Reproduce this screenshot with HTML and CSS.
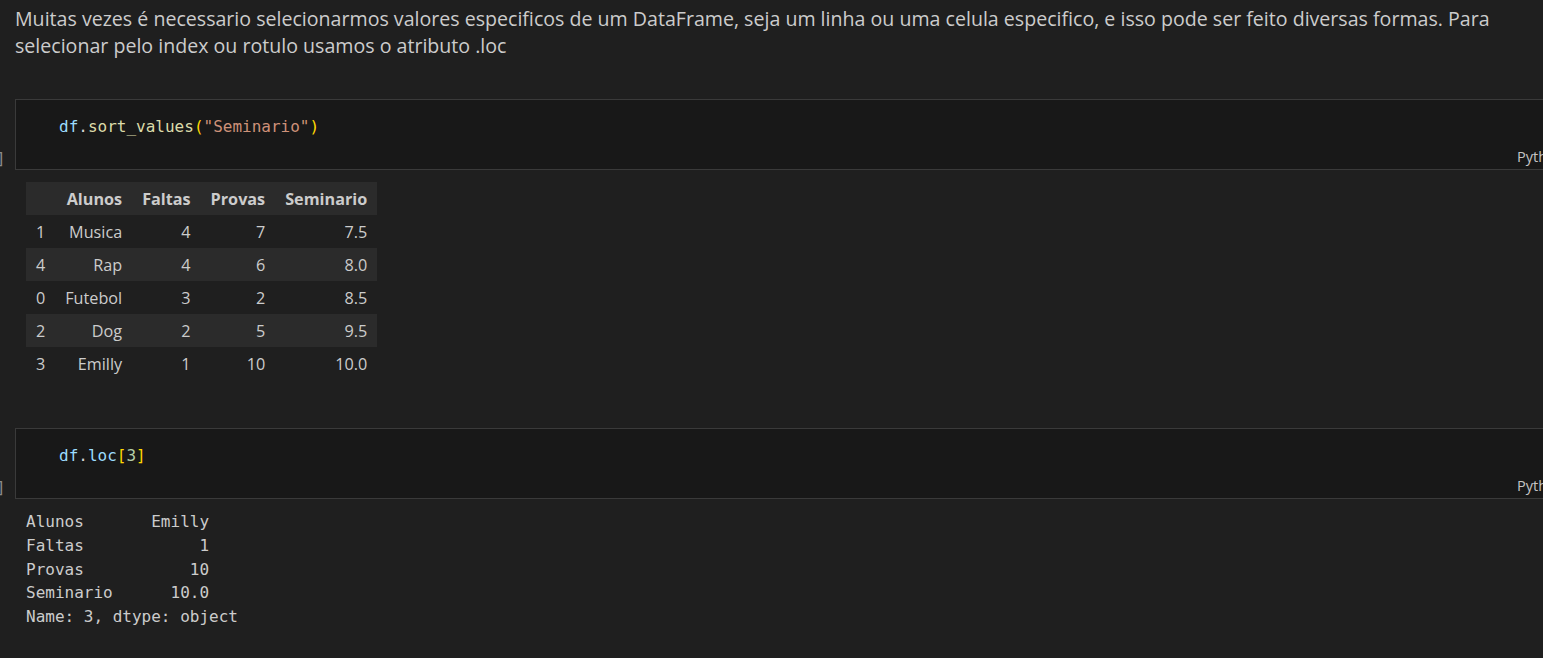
FILE: index.html
```html
<!DOCTYPE html>
<html lang="pt">
<head>
<meta charset="utf-8">
<title>Notebook</title>
<link rel="stylesheet" href="styles.css">
</head>
<body>
<div class="notebook">
  <div class="markdown">
    <p>Muitas vezes é necessario selecionarmos valores especificos de um DataFrame, seja um linha ou uma celula especifico, e isso pode ser feito diversas formas. Para selecionar pelo index ou rotulo usamos o atributo .loc</p>
  </div>

  <div class="code-row first">
    <div class="gutter"><span class="count">]</span></div>
    <div class="cell">
      <div class="editor"><code><span class="var">df</span><span class="punc">.</span><span class="fn">sort_values</span><span class="brk">(</span><span class="str">"Seminario"</span><span class="brk">)</span></code></div>
      <div class="status"><span class="lang">Python</span></div>
    </div>
  </div>
  <div class="output">
    <table class="df">
      <thead>
        <tr><th></th><th>Alunos</th><th>Faltas</th><th>Provas</th><th>Seminario</th></tr>
      </thead>
      <tbody>
        <tr><th>1</th><td>Musica</td><td>4</td><td>7</td><td>7.5</td></tr>
        <tr><th>4</th><td>Rap</td><td>4</td><td>6</td><td>8.0</td></tr>
        <tr><th>0</th><td>Futebol</td><td>3</td><td>2</td><td>8.5</td></tr>
        <tr><th>2</th><td>Dog</td><td>2</td><td>5</td><td>9.5</td></tr>
        <tr><th>3</th><td>Emilly</td><td>1</td><td>10</td><td>10.0</td></tr>
      </tbody>
    </table>
  </div>

  <div class="code-row second">
    <div class="gutter"><span class="count">]</span></div>
    <div class="cell">
      <div class="editor"><code><span class="var">df</span><span class="punc">.</span><span class="var">loc</span><span class="brk">[</span><span class="num">3</span><span class="brk">]</span></code></div>
      <div class="status"><span class="lang">Python</span></div>
    </div>
  </div>
  <div class="output">
<pre class="text-out">Alunos       Emilly
Faltas            1
Provas           10
Seminario      10.0
Name: 3, dtype: object</pre>
  </div>
</div>
</body>
</html>
```

FILE: styles.css
```css
html, body {
  margin: 0;
  padding: 0;
  background: #1f1f1f;
  overflow: hidden;
}
body {
  width: 1543px;
  height: 658px;
  color: #cccccc;
  font-family: "Open Sans", "Noto Sans", sans-serif;
}
.notebook {
  display: flex;
  flex-direction: column;
}
.markdown {
  padding: 5px 0 0 15px;
  width: 1510px;
}
.markdown p {
  margin: 0;
  font-size: 19.6px;
  line-height: 27px;
  color: #cccccc;
}
.code-row {
  display: flex;
  align-items: stretch;
}
.code-row.first {
  margin-top: 40px;
}
.code-row.second {
  margin-top: 48px;
}
.gutter {
  width: 15px;
  flex: none;
  display: flex;
  align-items: flex-end;
  padding-bottom: 1px;
  box-sizing: border-box;
}
.count {
  font-family: "DejaVu Sans Mono", monospace;
  font-size: 16px;
  line-height: 20px;
  color: #8a8a8a;
  margin-left: -4px;
}
.cell {
  width: 1600px;
  flex: none;
  background: #181818;
  border: 1px solid #3a3a3a;
  display: flex;
  flex-direction: column;
}
.editor {
  height: 44px;
  padding: 17px 0 0 43px;
  box-sizing: border-box;
}
.editor code {
  font-family: "DejaVu Sans Mono", monospace;
  font-size: 16px;
  line-height: 20px;
  display: block;
  white-space: pre;
}
.var { color: #9cdcfe; }
.punc { color: #d4d4d4; }
.fn { color: #dcdcaa; }
.brk { color: #ffd700; }
.str { color: #ce9178; }
.num { color: #b5cea8; }
.status {
  height: 25px;
  display: flex;
  align-items: center;
  padding-left: 1501px;
}
.lang {
  font-size: 14.5px;
  color: #c4c4c4;
  white-space: nowrap;
}
.output {
  padding-left: 26px;
}
.df {
  margin-top: 12px;
  border-collapse: collapse;
  font-size: 16.2px;
  color: #cccccc;
}
.df th, .df td {
  height: 33px;
  padding: 0 10px;
  text-align: right;
  box-sizing: border-box;
  white-space: nowrap;
}
.df thead th {
  font-weight: 700;
  background: #2b2b2b;
}
.df tbody th {
  font-weight: 400;
  text-align: left;
}
.df tbody tr:nth-child(even) {
  background: #2b2b2b;
}
.text-out {
  margin: 11px 0 0 0;
  font-family: "DejaVu Sans Mono", monospace;
  font-size: 16px;
  line-height: 23.8px;
  color: #cccccc;
}
```
